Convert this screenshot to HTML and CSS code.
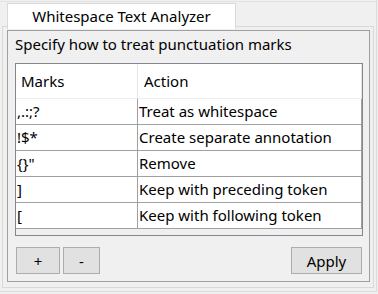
FILE: index.html
```html
<!DOCTYPE html>
<html lang="en">
<head>
    <meta charset="UTF-8">
    <title>Whitespace Text Analyzer</title>
    <link rel="stylesheet" href="styles.css">
</head>
<body>
    <div class="window">
        <div class="tabbar">
            <div class="tab">Whitespace Text Analyzer</div>
        </div>
        <div class="pane">
            <div class="group">
                <div class="group-title">Specify how to treat punctuation marks</div>
                <div class="list">
                    <div class="list-head">
                        <div class="head-cell marks">Marks</div>
                        <div class="head-cell action">Action</div>
                    </div>
                    <div class="row">
                        <div class="cell marks">,.:;?</div>
                        <div class="cell action">Treat as whitespace</div>
                    </div>
                    <div class="row">
                        <div class="cell marks">!$*</div>
                        <div class="cell action">Create separate annotation</div>
                    </div>
                    <div class="row">
                        <div class="cell marks">{}"</div>
                        <div class="cell action">Remove</div>
                    </div>
                    <div class="row">
                        <div class="cell marks">]</div>
                        <div class="cell action">Keep with preceding token</div>
                    </div>
                    <div class="row">
                        <div class="cell marks">[</div>
                        <div class="cell action">Keep with following token</div>
                    </div>
                </div>
                <div class="buttons">
                    <button class="btn btn-add">+</button>
                    <button class="btn btn-remove">-</button>
                    <button class="btn btn-apply">Apply</button>
                </div>
            </div>
        </div>
    </div>
</body>
</html>
```

FILE: styles.css
```css
body {
    margin: 0;
    background-color: #f0f0f0;
    font-family: "Noto Sans", "Open Sans", sans-serif;
    font-size: 15px;
    color: #000;
    width: 378px;
    height: 294px;
    overflow: hidden;
}
.window {
    width: 377px;
    height: 292px;
    padding-top: 1px;
    border-right: 1px solid #dcdcdc;
    border-bottom: 1px solid #dcdcdc;
    box-sizing: border-box;
}
.tabbar {
    display: flex;
    height: 26px;
    padding-left: 7px;
    border-top: 1px solid #e3e3e3;
    margin-bottom: -1px;
    box-sizing: border-box;
    position: relative;
    z-index: 1;
}
.tab {
    width: 229px;
    height: 26px;
    margin-top: 1px;
    background-color: #fff;
    border: 1px solid #d9d9d9;
    border-bottom: none;
    box-sizing: border-box;
    text-align: center;
    line-height: 24px;
}
.pane {
    margin-left: 2px;
    width: 372px;
    height: 262px;
    padding: 3px 3px 0 4px;
    border: 1px solid #d9d9d9;
    box-sizing: border-box;
}
.group {
    height: 252px;
    padding: 3px 6px 7px 7px;
    border: 1px solid #a0a0a0;
    box-sizing: border-box;
}
.group-title {
    line-height: 20px;
    margin-bottom: 9px;
}
.list {
    height: 173px;
    border: 1px solid #828790;
    background-color: #f0f0f0;
    box-sizing: border-box;
}
.list-head {
    display: flex;
    height: 35px;
    background-color: #fff;
    border-bottom: 1px solid #ececec;
    box-sizing: border-box;
}
.head-cell {
    line-height: 34px;
    border-right: 1px solid #e5e5e5;
    box-sizing: border-box;
}
.head-cell.marks {
    width: 122px;
    padding-left: 5px;
}
.head-cell.action {
    width: 224px;
    padding-left: 6px;
}
.row {
    display: flex;
    height: 26px;
}
.cell {
    height: 26px;
    line-height: 25px;
    background-color: #fff;
    border-right: 1px solid #a0a0a0;
    border-bottom: 1px solid #a0a0a0;
    box-sizing: border-box;
    white-space: nowrap;
}
.cell.marks {
    width: 122px;
    padding-left: 1px;
}
.cell.action {
    width: 224px;
    padding-left: 1px;
}
.buttons {
    display: flex;
    gap: 3px;
    margin-top: 11px;
    padding: 0 1px;
}
.btn {
    height: 27px;
    background-color: #e1e1e1;
    border: 1px solid #adadad;
    border-radius: 0;
    font-family: inherit;
    font-size: 15px;
    color: #000;
    padding: 0;
}
.btn-add {
    width: 44px;
}
.btn-remove {
    width: 37px;
}
.btn-apply {
    width: 71px;
    margin-left: auto;
}
```
